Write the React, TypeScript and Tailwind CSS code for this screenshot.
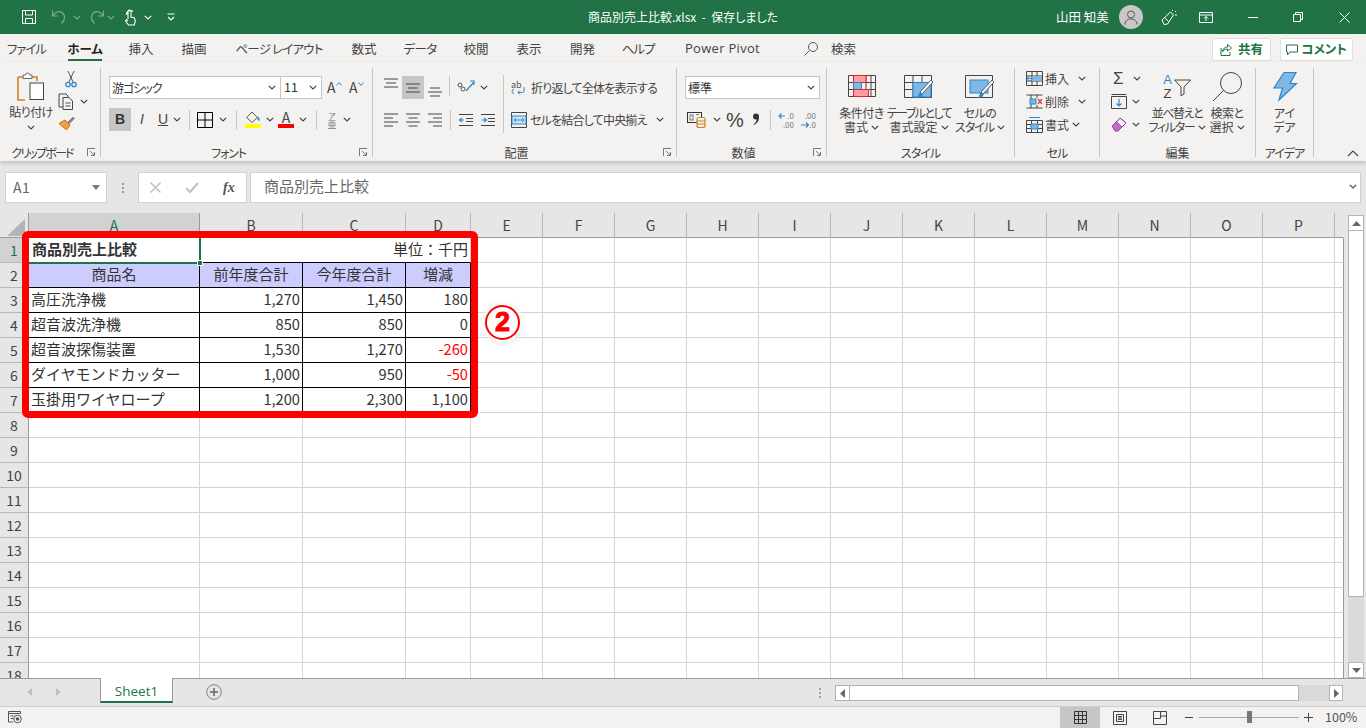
import React from "react";

const Chev = ({ c = "#444" }: { c?: string }) => (
  <svg width="8" height="5" viewBox="0 0 8 5" className="shrink-0"><path d="M.8.8 4 4 7.2.8" fill="none" stroke={c} strokeWidth="1.2" /></svg>
);

const Launcher = () => (
  <svg width="9" height="9" viewBox="0 0 9 9" className="absolute right-[4px] bottom-0">
    <path d="M.5 8V.5H8M3 3l4 4M4 7.5h3.500V4" fill="none" stroke="#777" strokeWidth="1" />
  </svg>
);

const Group = ({ w, label, children, launcher, lc = "" }: { w: string; label: string; children: React.ReactNode; launcher?: boolean; lc?: string }) => (
  <div className={`${w} relative flex h-[89px] shrink-0 flex-col border-r border-[#c8c6c4]`}>
    <div className="h-[77px] shrink-0">{children}</div>
    <div className={`h-[12px] text-center text-[12px] leading-[16px] text-[#444] ${launcher ? "pr-[16px]" : ""} ${lc}`}>{label}</div>
    {launcher && <Launcher />}
  </div>
);

const S = ({ w, h, children, className = "" }: { w: number; h: number; children: React.ReactNode; className?: string }) => (
  <svg width={w} height={h} viewBox={`0 0 ${w} ${h}`} className={`shrink-0 overflow-visible ${className}`} fill="none">{children}</svg>
);

const Lines = ({ kind }: { kind: "l" | "c" | "r" }) => {
  const s = kind === "l" ? ["M0 1h14", "M0 5h9", "M0 9h14", "M0 13h9"] : kind === "c" ? ["M0 1h14", "M2.5 5h9", "M0 9h14", "M2.5 13h9"] : ["M0 1h14", "M5 5h9", "M0 9h14", "M5 13h9"];
  return <S w={14} h={14}>{s.map((d) => <path key={d} d={d} stroke="#444" />)}</S>;
};

const Sep = ({ m = "" }: { m?: string }) => <div className={`h-[20px] w-px shrink-0 bg-[#c8c6c4] ${m}`} />;

const Big = ({ l1, l2, chev, c1 = "", c2 = "" }: { l1: string; l2: string; chev?: boolean; c1?: string; c2?: string }) => (
  <div className="flex flex-col items-center text-[12px] leading-[14px] text-[#444] whitespace-nowrap">
    <div className={c1}>{l1}</div>
    <div className="flex items-center gap-[3px]"><span className={c2}>{l2}</span>{chev && <Chev />}</div>
  </div>
);

const tabs = [
  ["ファイル", "ml-[8px] w-[37px] tracking-[-1px]"],
  ["ホーム", "ml-[23px] w-[34px] font-bold text-[#222]"],
  ["挿入", "ml-[26px] w-[26px]"],
  ["描画", "ml-[27px] w-[26px]"],
  ["ページ レイアウト", "ml-[29px] w-[86px] tracking-[-0.8px]"],
  ["数式", "ml-[29px] w-[26px]"],
  ["データ", "ml-[27px] w-[32px] tracking-[-0.6px]"],
  ["校閲", "ml-[27px] w-[26px]"],
  ["表示", "ml-[27px] w-[26px]"],
  ["開発", "ml-[28px] w-[25px]"],
  ["ヘルプ", "ml-[27px] w-[32px] tracking-[-1px]"],
];

const colLetters = ["A", "B", "C", "D", "E", "F", "G", "H", "I", "J", "K", "L", "M", "N", "O", "P", ""];

type Cell = { t?: string; c?: string };
const rowsData: Record<number, Cell[]> = {
  1: [{ t: "商品別売上比較", c: "font-bold pl-[3px] text-[#111] border-b-[#000] text-[15px]" }, { c: "border-r-0 border-b-[#000]" }, { c: "border-r-0 border-b-[#000]" }, { t: "単位：千円", c: "justify-end pr-[2px] border-b-[#000] text-[15px]" }],
  2: [{ t: "商品名", c: "justify-center text-[15px]" }, { t: "前年度合計", c: "justify-center text-[15px]" }, { t: "今年度合計", c: "justify-center text-[15px]" }, { t: "増減", c: "justify-center text-[15px]" }],
  3: [{ t: "高圧洗浄機", c: "text-[15px]" }, { t: "1,270" }, { t: "1,450" }, { t: "180" }],
  4: [{ t: "超音波洗浄機", c: "text-[15px]" }, { t: "850" }, { t: "850" }, { t: "0" }],
  5: [{ t: "超音波探傷装置", c: "text-[15px]" }, { t: "1,530" }, { t: "1,270" }, { t: "-260", c: "text-[#ff0000]" }],
  6: [{ t: "ダイヤモンドカッター", c: "text-[15px]" }, { t: "1,000" }, { t: "950" }, { t: "-50", c: "text-[#ff0000]" }],
  7: [{ t: "玉掛用ワイヤロープ", c: "text-[15px]" }, { t: "1,200" }, { t: "2,300" }, { t: "1,100" }],
};

const Sheet = () => (
  <div className="relative grid h-[465px] w-[1344px] shrink-0 grid-cols-[29px_171px_103px_103px_65px_repeat(12,72px)_9px] auto-rows-[25px] overflow-hidden bg-white">
    <div className="flex border-r border-b border-[#9a9a9a] bg-[#e6e6e6] pt-[6px] pl-[7px]">
      <svg width="18" height="17" viewBox="0 0 18 17"><path d="M18 0v17H0z" fill="#b4b4b4" /></svg>
    </div>
    {colLetters.map((l, i) => (
      <div key={i} className={`flex items-center justify-center border-r border-b text-[14px] ${i === 0 ? "border-r-[#9a9a9a] border-b-[#9a9a9a] bg-[#d2d2d2] text-[#217346]" : i === 16 ? "border-r-[#e6e6e6] border-b-[#9a9a9a] bg-[#e6e6e6]" : "border-r-[#b8b8b8] border-b-[#9a9a9a] bg-[#e6e6e6] text-[#444]"}`}>{l}</div>
    ))}
    {Array.from({ length: 18 }, (_, ri) => {
      const r = ri + 1;
      const data = rowsData[r];
      return (
        <React.Fragment key={r}>
          <div className={`flex items-center justify-center border-r border-b border-r-[#9a9a9a] border-b-[#b8b8b8] text-[14px] ${r === 1 ? "bg-[#d2d2d2] text-[#217346]" : "bg-[#e6e6e6] text-[#444]"}`}>{r}</div>
          {colLetters.map((_, ci) => {
            const cell = data?.[ci];
            if (cell) {
              const header = r === 2;
              const border = r === 1 ? "border-b border-r border-r-[#d4d4d4]" : "border-b border-r border-black";
              const align = ci > 0 && r > 2 ? "justify-end pr-[2px]" : ci === 0 && r > 2 ? "pl-[2px]" : "";
              return (
                <div key={ci} className={`flex items-center whitespace-nowrap pb-[2px] text-[14.67px] text-[#333] ${border} ${align} ${header ? "bg-[#ccccff]" : "bg-white"} ${cell.c ?? ""}`}>{cell.t}</div>
              );
            }
            return <div key={ci} className={`border-r border-b border-b-[#d4d4d4] ${ci === 16 ? "border-r-[#9a9a9a]" : "border-r-[#d4d4d4]"}`} />;
          })}
        </React.Fragment>
      );
    })}
    <div className="pointer-events-none absolute left-[29px] top-[25px] h-[26px] w-[172px] border-r-2 border-b-2 border-[#217346]" />
    <div className="absolute left-[197px] top-[47px] h-[6px] w-[6px] border border-white bg-[#217346]" />
    <div className="pointer-events-none absolute left-[22px] top-[18px] h-[187px] w-[456px] rounded-[6px] border-[7px] border-[#ff0000]" />
    <div className="absolute left-[485px] top-[92px] flex h-[35px] w-[35px] items-center justify-center rounded-full border-2 border-[#ff0000] bg-white text-[27px] font-bold leading-none text-[#ff0000] shadow-[0_0_4px_3px_rgba(255,255,255,0.95),0_1px_5px_3px_rgba(0,0,0,0.1)] [-webkit-text-stroke:1px_#ff0000] [font-family:'Liberation_Sans',sans-serif]">2</div>
  </div>
);

export default function App() {
  return (
    <div className="flex h-[728px] w-[1366px] flex-col overflow-hidden bg-[#e6e6e6] [font-family:'Noto_Sans_CJK_JP','Liberation_Sans',sans-serif]">
      {/* title bar */}
      <div className="flex h-[34px] shrink-0 items-center bg-[#217346] text-white">
        <S w={16} h={16} className="ml-[21px]"><path d="M1.500 1.500h13v13h-13zM4.500 1.500v4.500h7V1.500M4.500 14.500V9.500h7v5" stroke="#fff" /></S>
        <S w={16} h={16} className="ml-[14px]"><path d="M1.500 1.500V7h5.500M1.800 6.800C4 3 8 1.500 11 3.500c3.500 2.500 3.500 7.500-.5 11" stroke="#7fa891" strokeWidth="1.200" /></S>
        <div className="ml-[6px]"><Chev c="#7fa891" /></div>
        <S w={16} h={16} className="ml-[8px]"><path d="M14.500 1.500V7H9M14.200 6.800C12 3 8 1.500 5 3.500c-3.500 2.500-3.500 7.500.5 11" stroke="#7fa891" strokeWidth="1.200" /></S>
        <div className="ml-[2px]"><Chev c="#7fa891" /></div>
        <S w={12} h={17} className="ml-[9px]"><path d="M4 10V2.500a1.500 1.500 0 0 1 3 0V8l3.500 1 .8 3-1 4H4.500L1.500 12l1-1.500L4 12M2.500 6a4 4 0 0 1 6.500-3.500" stroke="#fff" strokeWidth="1.100" /></S>
        <div className="ml-[8px]"><Chev c="#fff" /></div>
        <S w={8} h={8} className="ml-[15px]"><path d="M.5 1h7M1 4l3 3 3-3" stroke="#fff" strokeWidth="1.100" /></S>
        <div className="ml-[412px] w-[192px] whitespace-nowrap text-center text-[12px] [font-feature-settings:'palt']">商品別売上比較.xlsx&nbsp; -&nbsp; 保存しました</div>
        <div className="ml-[277px] w-[52px] whitespace-nowrap text-[12.500px]">山田 知美</div>
        <div className="ml-[11px] flex h-[24px] w-[24px] items-center justify-center rounded-full bg-[#c8c8c8]">
          <S w={14} h={15}><circle cx="7" cy="4.500" r="3.500" stroke="#555" /><path d="M.8 14.500c.5-4 3-5.500 6.200-5.500s5.700 1.500 6.200 5.500" stroke="#555" /></S>
        </div>
        <S w={16} h={17} className="ml-[18px]"><path d="M1 11 9.500 3l3 3-6 9-3.500.5zM4 9l3.500 3.500M11 1l1 1M14 3l1-1M14 6h2" stroke="#fff" /></S>
        <S w={14} h={11} className="ml-[22px]"><path d="M.5.500h13v10H.500zM.5 3h13M7 9V4.500M5 6.500l2-2 2 2" stroke="#fff" /></S>
        <div className="ml-[35px] h-px w-[10px] bg-white" />
        <S w={10} h={10} className="ml-[35px]"><path d="M.5 2.500h7v7h-7zM2.500 2.500v-2h7v7h-2" stroke="#fff" /></S>
        <S w={11} h={11} className="ml-[36px]"><path d="m.5.500 10 10M10.500.500l-10 10" stroke="#fff" /></S>
      </div>

      {/* tabs */}
      <div className="flex h-[28px] shrink-0 items-start bg-[#f3f2f1] text-[12.500px] text-[#444] [font-feature-settings:'palt']">
        {tabs.map(([t, c]) => (
          <div key={t} className={`relative flex h-[27px] items-center justify-center whitespace-nowrap pt-[3px] ${c}`}>
            {t}
            {t === "ホーム" && <div className="absolute bottom-0 left-0 right-0 h-[2px] bg-[#217346]" />}
          </div>
        ))}
        <div className="ml-[31px] flex h-[27px] items-center pt-[3px] text-[13px] tracking-[0.3px] [font-family:'Open_Sans',sans-serif]">Power Pivot</div>
        <S w={14} h={14} className="ml-[44px] mt-[8px]"><circle cx="9" cy="5" r="4.500" stroke="#555" /><path d="M5.500 8.500.5 13.500" stroke="#555" /></S>
        <div className="ml-[13px] flex h-[27px] items-center pt-[3px]">検索</div>
        <div className="ml-[356px] mt-[4px] flex h-[23px] w-[59px] items-center justify-center gap-[5px] rounded-[2px] border border-[#e1dfdd] bg-white text-[12.500px] font-bold text-[#217346]">
          <S w={13} h={13}><path d="M7.500 1.500 11.500 5l-4 3V6c-3 0-4.500 1-5 3 0-3 2-5 5-5zM1 5v7.500h9V9" stroke="#217346" /></S>共有
        </div>
        <div className="ml-[9px] mt-[4px] flex h-[23px] w-[73px] items-center justify-center gap-[3px] rounded-[2px] border border-[#e1dfdd] bg-white text-[12.500px] font-bold text-[#217346]">
          <S w={12} h={12}><path d="M.5 1h11v7H4L1.500 11V8h-1z" stroke="#217346" /></S>コメント
        </div>
      </div>

      {/* ribbon */}
      <div className="relative flex h-[99px] shrink-0 bg-[#f3f2f1] pt-[6px] text-[#444] shadow-[0_2px_4px_rgba(0,0,0,0.18)] [font-feature-settings:'palt']">
        {/* clipboard */}
        <Group w="w-[101px]" label="クリップボード" launcher lc="tracking-[-1.800px]">
          <div className="flex">
            <div className="ml-[10px] flex w-[42px] flex-col items-center">
              <S w={28} h={28} className="mt-[4px]">
                <path d="M1 5h5M15 5h5v4M1 5v23h7" stroke="#d67f1e" strokeWidth="1.600" />
                <path d="M6 5V3h2.500a2 2 0 0 1 4 0H15v3.500H6z" fill="#fff" stroke="#666" />
                <rect x="13" y="11" width="13.500" height="16.500" fill="#fff" stroke="#444" />
              </S>
              <div className="mt-[5px] whitespace-nowrap text-[12px] leading-[14px] tracking-[-0.5px]">貼り付け</div>
              <div className="mt-[6px]"><Chev /></div>
            </div>
            <div className="ml-[6px] flex flex-col">
              <S w={12} h={17} className="ml-[7px] mt-[3px]"><path d="M3 0l5 11M9 0 4 11" stroke="#555" /><circle cx="3" cy="13.500" r="2.200" stroke="#2e86c8" strokeWidth="1.300" /><circle cx="9" cy="13.500" r="2.200" stroke="#2e86c8" strokeWidth="1.300" /></S>
              <div className="mt-[5px] flex items-center gap-[5px]">
                <S w={17} h={17}><path d="M1 1h7l2 2v11H1z" fill="#f3f2f1" stroke="#444" /><path d="M5 4.500h6l3.500 3.500v8.500H5z" fill="#f3f2f1" stroke="#444" /><path d="M7.500 10h5M7.500 13h5" stroke="#555" /></S>
                <Chev />
              </div>
              <S w={17} h={15} className="mt-[5px]"><path d="M9 8l6-6 1.500 1.500-6 6z" fill="#888" stroke="#666" strokeWidth=".6" /><path d="M1 8.500 7 5l5 5-3.500 5z" fill="#f0a040" stroke="#c8701a" /></S>
            </div>
          </div>
        </Group>

        {/* font */}
        <Group w="w-[272px]" label="フォント" launcher lc="tracking-[-1.200px]">
          <div className="flex flex-col pl-[8px] pt-[8px]">
            <div className="flex h-[23px] items-center">
              <div className="flex h-[23px] w-[172px] items-center justify-between border border-[#c6c6c6] bg-white pl-[2px] pr-[4px] text-[12px] tracking-[-1px] text-[#333]">游ゴシック<Chev /></div>
              <div className="flex h-[23px] w-[41px] items-center justify-between border border-l-0 border-[#c6c6c6] bg-white pl-[3px] pr-[4px] text-[12.500px] text-[#333]">11<Chev /></div>
              <div className="ml-[5px] flex w-[22px] items-center text-[14px]">A<S w={6} h={4} className="mb-[8px]"><path d="m.5 3.500 2.500-3 2.500 3" stroke="#2e86c8" /></S></div>
              <div className="flex w-[22px] items-center text-[14px]">A<S w={6} h={4} className="mb-[8px]"><path d="m.5.500 2.500 3 2.500-3" stroke="#2e86c8" /></S></div>
            </div>
            <div className="mt-[9px] flex h-[23px] items-center">
              <div className="flex h-[23px] w-[22px] items-center justify-center bg-[#c6c6c6] text-[14px] font-bold text-[#333] [font-family:'Liberation_Sans',sans-serif]">B</div>
              <div className="w-[22px] text-center text-[14px] italic [font-family:'Liberation_Sans',sans-serif]">I</div>
              <div className="w-[20px] text-center text-[14px] underline [font-family:'Liberation_Sans',sans-serif]">U</div>
              <Chev />
              <Sep m="ml-[8px]" />
              <S w={16} h={16} className="ml-[7px]"><path d="M.5.500h15v15H.500zM8 .5v15M.5 8h15" stroke="#000" /></S>
              <div className="ml-[6px]"><Chev /></div>
              <Sep m="ml-[9px]" />
              <div className="ml-[7px] flex w-[17px] flex-col items-center">
                <S w={15} h={13}><path d="m7 1 5.500 5.500L7 11.500 1.500 6.500z" stroke="#555" /><path d="M12.500 6c1 1.500 1.500 2.500 1.500 3.500" stroke="#2e86c8" strokeWidth="1.800" /></S>
                <div className="h-[4px] w-[16px] bg-[#ffff00]" />
              </div>
              <div className="ml-[5px]"><Chev /></div>
              <div className="ml-[4px] flex w-[16px] flex-col items-center text-[14px] leading-[13px]">A<div className="h-[4px] w-[16px] bg-[#ff0000]" /></div>
              <div className="ml-[5px]"><Chev /></div>
              <Sep m="ml-[9px]" />
              <S w={10} h={18} className="ml-[10px]">
                <text x="5" y="8" textAnchor="middle" fontSize="8" fill="#777">ア</text>
                <text x="5" y="17" textAnchor="middle" fontSize="9" fill="#777">亜</text>
              </S>
              <div className="ml-[6px]"><Chev /></div>
            </div>
          </div>
        </Group>

        {/* alignment */}
        <Group w="w-[304px]" label="配置" launcher>
          <div className="flex pl-[11px] pt-[8px]">
            <div className="flex w-[120px] flex-col">
              <div className="flex h-[23px] items-start">
                <S w={14} h={14} className="mt-[2px]"><path d="M0 1h14M2 5h10M0 9h14" stroke="#444" /></S>
                <div className="ml-[4px] flex h-[23px] w-[22px] items-center justify-center bg-[#c6c6c6]"><S w={14} h={10}><path d="M0 1h14M2 5h10M0 9h14" stroke="#444" /></S></div>
                <S w={14} h={10} className="ml-[4px] mt-[11px]"><path d="M2 1h10M0 5h14M2 9h10" stroke="#444" /></S>
                <Sep m="ml-[7px]" />
                <S w={18} h={15} className="ml-[7px] mt-[3px]"><path d="M9 12 17 3M13 2h4v4" stroke="#2e86c8" strokeWidth="1.200" /><circle cx="3" cy="6" r="2" stroke="#555" /><circle cx="6" cy="10" r="2" stroke="#555" /></S>
                <div className="ml-[5px] mt-[9px]"><Chev /></div>
              </div>
              <div className="mt-[9px] flex h-[23px] items-center">
                <Lines kind="l" />
                <div className="ml-[8px]"><Lines kind="c" /></div>
                <div className="ml-[8px]"><Lines kind="r" /></div>
                <Sep m="ml-[8px]" />
                <S w={14} h={12} className="ml-[8px]"><path d="M0 .5h14M7 4.500h7M7 7.500h7M0 11.500h14" stroke="#444" /><path d="M5 6H.500M3 4 .500 6 3 8" stroke="#2e86c8" strokeWidth="1.100" /></S>
                <S w={14} h={12} className="ml-[8px]"><path d="M0 .5h14M7 4.500h7M7 7.500h7M0 11.500h14" stroke="#444" /><path d="M.5 6H5M3 4l2.500 2L3 8" stroke="#2e86c8" strokeWidth="1.100" /></S>
              </div>
            </div>
            <Sep m="h-[58px] ml-[-1px] mt-[-1px]" />
            <div className="ml-[7px] flex flex-col text-[12px]">
              <div className="flex h-[23px] items-center whitespace-nowrap">
                <S w={17} h={17} className="mr-[3px]"><text x="0" y="9" fontSize="9" fill="#555">ab</text><path d="M3 10.500a2 2 0 1 0 0 4M13 8v4a1.500 1.500 0 0 1-1.500 1.500H7M9 11.500l-2 2 2 2" stroke="#2e86c8" strokeWidth="1" /></S>
                <span className="tracking-[-0.8px]">折り返して全体を表示する</span>
              </div>
              <div className="mt-[9px] flex h-[23px] items-center whitespace-nowrap">
                <S w={16} h={16} className="mr-[3px]"><path d="M.5.500h15v15H.500z" stroke="#444" /><rect x="1" y="4" width="14" height="8" fill="#cfe5f5" stroke="#2e86c8" /><path d="M3 8h10M5 6 3 8l2 2M11 6l2 2-2 2" stroke="#2e86c8" /></S>
                <span className="tracking-[-0.8px]">セルを結合して中央揃え</span>
                <div className="ml-[9px]"><Chev /></div>
              </div>
            </div>
          </div>
        </Group>

        {/* number */}
        <Group w="w-[150px]" label="数値" launcher>
          <div className="flex flex-col pl-[8px] pt-[8px]">
            <div className="flex h-[23px] w-[135px] items-center justify-between border border-[#c6c6c6] bg-white pl-[2px] pr-[4px] text-[12px] text-[#333]">標準<Chev /></div>
            <div className="mt-[9px] flex h-[23px] items-center">
              <S w={20} h={17} className="ml-[2px]"><rect x=".5" y="1.500" width="14" height="10" stroke="#333" /><rect x="3" y="4" width="3" height="5" stroke="#777" /><path d="M9 3.500h3" stroke="#777" /><rect x="10" y="6.500" width="8" height="10" rx="2" fill="#f3f2f1" stroke="#d67f1e" strokeWidth="1.200" /><path d="M10 10h8M10 13h8" stroke="#d67f1e" /></S>
              <div className="ml-[6px]"><Chev /></div>
              <div className="ml-[5px] w-[18px] text-center text-[20px] leading-none [font-family:'Liberation_Sans',sans-serif]">%</div>
              <S w={9} h={13} className="ml-[7px]"><circle cx="5" cy="3.500" r="3" fill="#333" /><path d="M7.800 4c.5 3.500-1.500 6.500-4.800 8l-.5-.8C4.500 10 5.500 8.500 5.500 6.500z" fill="#333" /></S>
              <Sep m="ml-[10px]" />
              <S w={16} h={18} className="ml-[7px]">
                <text x="16" y="8" textAnchor="end" fontSize="8" fill="#777">.0</text>
                <text x="16" y="17" textAnchor="end" fontSize="8" fill="#777">.00</text>
                <path d="M7 5H1M3.500 2.500 1 5l2.500 2.500" stroke="#2e86c8" strokeWidth="1.100" />
              </S>
              <S w={16} h={18} className="ml-[6px]">
                <text x="16" y="8" textAnchor="end" fontSize="8" fill="#777">.00</text>
                <text x="16" y="17" textAnchor="end" fontSize="8" fill="#777">.0</text>
                <path d="M1 14h7M6 11.500 8.500 14 6 16.500" stroke="#2e86c8" strokeWidth="1.100" />
              </S>
            </div>
          </div>
        </Group>

        {/* styles */}
        <Group w="w-[188px]" label="スタイル" lc="tracking-[-1px]">
          <div className="flex pt-[7px]">
            <div className="flex w-[66px] flex-col items-center pl-[3px]">
              <S w={28} h={23}><path d="M.5.500h27v21H.500zM5.500.500v21M12 .5v21M18 .5v21M23 .5v21M.5 7.500h27M.5 14.500h27" stroke="#444" /><rect x="5.500" y=".5" width="12.500" height="7" fill="#ff9ca3" stroke="#d92a2a" /><rect x="5.500" y="7.500" width="8" height="7" fill="#7fb7e6" stroke="#2e86c8" /><rect x="5.500" y="14.500" width="15" height="7" fill="#ff9ca3" stroke="#d92a2a" /></S>
              <div className="mt-[8px]"><Big l1="条件付き" l2="書式" chev c1="tracking-[-0.5px]" /></div>
            </div>
            <div className="flex w-[52px] flex-col items-center">
              <S w={30} h={27} className="-mb-[4px]"><path d="M.5.500h27v22H.500zM.5 7.500h27M.5 14.500h27M9 .5v22M18 .5v22" stroke="#444" /><rect x="9" y="7.500" width="18" height="14.500" fill="#7fb7e6" stroke="#2e86c8" /><path d="M29 7 18 19l-2-2L27 5z" fill="#fff" stroke="#555" /><path d="M15.500 18c2-1 3 .5 3 1.500 0 2-2 3.500-5 3.500 1-1.500.5-4 2-5z" fill="#2e86c8" /></S>
              <div className="mt-[8px]"><Big l1="テーブルとして" l2="書式設定" chev c1="tracking-[-1.500px]" /></div>
            </div>
            <div className="ml-[5px] flex w-[60px] flex-col items-center">
              <S w={30} h={27} className="-mb-[4px]"><path d="M.5.500h27v22H.500z" stroke="#444" /><rect x="5" y="5" width="18" height="13" fill="#7fb7e6" stroke="#2e86c8" /><path d="M29 7 18 19l-2-2L27 5z" fill="#fff" stroke="#555" /><path d="M15.500 18c2-1 3 .5 3 1.500 0 2-2 3.500-5 3.500 1-1.500.5-4 2-5z" fill="#2e86c8" /></S>
              <div className="mt-[8px]"><Big l1="セルの" l2="スタイル" chev c1="tracking-[-0.5px]" c2="tracking-[-1px]" /></div>
            </div>
          </div>
        </Group>

        {/* cells */}
        <Group w="w-[85px]" label="セル" lc="tracking-[-1px]">
          <div className="-mt-px flex flex-col pl-[11px] text-[12px]">
            {[
              { t: "挿入", ml: "ml-[9px]", i: <S w={17} h={15}><path d="M.5.500h16v14H.500zM.5 5h16M.5 10h16M6 .5v14M11 .5v14" stroke="#444" /><rect x="6" y="5" width="10" height="5" fill="#7fb7e6" /><path d="M7 7.500H1M3.500 5 1 7.500 3.500 10" stroke="#2e86c8" fill="none" /></S> },
              { t: "削除", ml: "ml-[9px]", i: <S w={17} h={15}><path d="M.5 1h16M.5 14h16M5 1v13M11 1v3M11 11v3" stroke="#444" /><rect x="4" y="5" width="6" height="5" fill="#7fb7e6" stroke="#2e86c8" /><path d="m12 5 4 5M16 5l-4 5" stroke="#e23d3d" strokeWidth="1.300" /></S> },
              { t: "書式", ml: "ml-[3px]", i: <S w={17} h={16}><path d="M.5 3.500h16v12H.500zM5.500 3.500v12M11.500 3.500v12M.5 7.500h16M.5 11.500h16" stroke="#444" /><rect x="5" y="7" width="7" height="5" fill="#7fb7e6" stroke="#2e86c8" /><path d="M3 .5h11" stroke="#2e86c8" /></S> },
            ].map((r) => (
              <div key={r.t} className="flex h-[23px] items-center">
                {r.i}
                <span className="ml-[2px]">{r.t}</span>
                <div className={r.ml}><Chev /></div>
              </div>
            ))}
          </div>
        </Group>

        {/* editing */}
        <Group w="w-[156px]" label="編集">
          <div className="flex pt-[3px]">
            <div className="-mt-[4px] ml-[11px] flex w-[38px] flex-col">
              <div className="flex h-[23px] items-center"><span className="ml-[2px] w-[14px] text-[17px] leading-none text-[#444] [font-family:'Liberation_Sans',sans-serif]">Σ</span><div className="ml-[6px]"><Chev /></div></div>
              <div className="flex h-[23px] items-center"><S w={16} h={15}><path d="M.5 2.500h15v12H.500zM.5 .5h15" stroke="#444" /><path d="M8 5v7M5.500 9.500 8 12l2.500-2.500" stroke="#2e86c8" strokeWidth="1.200" /></S><div className="ml-[5px]"><Chev /></div></div>
              <div className="flex h-[23px] items-center"><S w={16} h={15}><path d="M1 9l8-8 6 5-8 8H4z" fill="#c26bc9" stroke="#9a3fa3" /><path d="M5.500 5 11 10l4-4-6-5z" fill="#f4f0f5" stroke="#9a3fa3" /></S><div className="ml-[5px]"><Chev /></div></div>
            </div>
            <div className="flex w-[56px] flex-col items-center">
              <div className="mt-[1px] flex h-[29px] items-center">
                <div className="flex flex-col items-center text-[13px] leading-[14px] [font-family:'Liberation_Sans',sans-serif]"><span className="text-[#2e86c8]">A</span><span>Z</span></div>
                <S w={17} h={17} className="ml-[2px] mt-[1px]"><path d="M.5 1h16L10 8v7l-3 2V8z" stroke="#444" /></S>
              </div>
              <div className="mt-[5px]"><Big l1="並べ替えと" l2="フィルター" chev c1="tracking-[-1.400px]" c2="tracking-[-1.300px]" /></div>
            </div>
            <div className="flex w-[44px] flex-col items-center">
              <S w={30} h={30} className="mt-[1px]"><circle cx="19" cy="11" r="10.500" stroke="#444" /><path d="M11.500 18.500 1 29" stroke="#444" /></S>
              <div className="mt-[4px]"><Big l1="検索と" l2="選択" chev c1="tracking-[-0.5px]" /></div>
            </div>
          </div>
        </Group>

        {/* ideas */}
        <Group w="w-[58px]" label="アイデア" lc="tracking-[-1px]">
          <div className="flex flex-col items-center pt-[4px]">
            <S w={24} h={29}><path d="M11 .5h12l-6 11h6.500L6 28l3.500-12H1z" fill="#7fb7e6" stroke="#2e86c8" strokeWidth="1.200" /></S>
            <div className="mt-[5px]"><Big l1="アイ" l2="デア" /></div>
          </div>
        </Group>
        <svg width="12" height="7" viewBox="0 0 12 7" className="absolute left-[1347px] top-[88px]"><path d="m1 6 5-5 5 5" fill="none" stroke="#444" strokeWidth="1.200" /></svg>
      </div>

      {/* formula bar */}
      <div className="mt-[11px] flex h-[31px] shrink-0 items-stretch">
        <div className="ml-[5px] flex w-[102px] items-center justify-between border border-[#d0d0d0] bg-white pl-[7px] pr-[6px] text-[14px] tracking-[0.5px] text-[#666]">
          A1
          <svg width="8" height="5" viewBox="0 0 8 5"><path d="M0 0h8L4 5z" fill="#777" /></svg>
        </div>
        <div className="flex w-[31px] flex-col items-center justify-center gap-[2px]">
          <div className="h-[2px] w-[2px] bg-[#999]" /><div className="h-[2px] w-[2px] bg-[#999]" /><div className="h-[2px] w-[2px] bg-[#999]" />
        </div>
        <div className="flex w-[109px] items-center border border-[#d0d0d0] bg-white">
          <S w={11} h={11} className="ml-[11px]"><path d="m.5.500 10 10M10.500.500l-10 10" stroke="#c0c0c0" strokeWidth="1.500" /></S>
          <S w={14} h={11} className="ml-[24px]"><path d="m1 6 4 4 8-9" stroke="#c0c0c0" strokeWidth="2" /></S>
          <div className="ml-[24px] text-[14px] font-bold italic leading-none text-[#555] [font-family:'Liberation_Serif',serif]">fx</div>
        </div>
        <div className="ml-[3px] flex w-[1111px] items-center justify-between border border-[#d0d0d0] bg-white pb-[2px] pl-[13px] pr-[3px] text-[15px] text-[#666]">
          商品別売上比較
          <Chev />
        </div>
      </div>

      {/* sheet */}
      <div className="mt-[10px] flex h-[465px] shrink-0">
        <Sheet />
        <div className="flex w-[22px] flex-col pl-[4px] pr-[2px] pt-[2px]">
          <div className="flex h-[16px] items-center justify-center border border-[#b4b4b4] bg-white"><svg width="9" height="5" viewBox="0 0 9 5"><path d="M4.500 0 9 5H0z" fill="#666" /></svg></div>
          <div className="h-[366px] border-x border-b border-[#b4b4b4] bg-white" />
          <div className="flex-1 bg-[#d9d9d9]" />
          <div className="flex h-[16px] items-center justify-center border border-[#b4b4b4] bg-white"><svg width="9" height="5" viewBox="0 0 9 5"><path d="M0 0h9L4.500 5z" fill="#666" /></svg></div>
        </div>
      </div>

      {/* sheet tabs */}
      <div className="flex h-[28px] shrink-0 items-start border-t border-[#9a9a9a] bg-[#e6e6e6]">
        <svg width="5" height="8" viewBox="0 0 5 8" className="ml-[27px] mt-[9px]"><path d="M5 0v8L0 4z" fill="#c0c0c0" /></svg>
        <svg width="5" height="8" viewBox="0 0 5 8" className="ml-[24px] mt-[9px]"><path d="M0 0v8l5-4z" fill="#c0c0c0" /></svg>
        <div className="ml-[39px] -mt-px flex h-[25px] w-[73px] items-center justify-center border-x border-[#9a9a9a] border-b-2 border-b-[#217346] bg-white pt-[3px] text-[13.500px] text-[#217346] [font-family:'Open_Sans',sans-serif]">Sheet1</div>
        <svg width="16" height="16" viewBox="0 0 16 16" className="ml-[33px] mt-[5px]"><circle cx="8" cy="8" r="7.300" fill="none" stroke="#808080" /><path d="M8 4v8M4 8h8" stroke="#666" strokeWidth="1.500" /></svg>
        <div className="ml-[597px] mt-[6px] flex h-[16px] w-[2px] flex-col items-center justify-center gap-[2px]">
          <div className="h-[2px] w-[2px] bg-[#a0a0a0]" /><div className="h-[2px] w-[2px] bg-[#a0a0a0]" /><div className="h-[2px] w-[2px] bg-[#a0a0a0]" />
        </div>
        <div className="ml-[14px] mt-[6px] flex h-[16px] w-[508px]">
          <div className="flex w-[15px] items-center justify-center border border-[#b4b4b4] bg-white"><svg width="5" height="9" viewBox="0 0 5 9"><path d="M5 0v9L0 4.500z" fill="#666" /></svg></div>
          <div className="w-[449px] border-y border-r border-[#b4b4b4] bg-white" />
          <div className="flex-1 bg-[#d9d9d9]" />
          <div className="flex w-[14px] items-center justify-center border border-[#b4b4b4] bg-white"><svg width="5" height="9" viewBox="0 0 5 9"><path d="M0 0v9l5-4.500z" fill="#666" /></svg></div>
        </div>
      </div>

      {/* status */}
      <div className="flex h-[22px] shrink-0 items-center border-t border-[#d0cecb] bg-[#f3f2f1] text-[#444]">
        <S w={14} h={13} className="ml-[8px]"><path d="M.5.500h12v2H.500zM.5 2.500V11H5M2.500 5h3M2.500 7.500h3" stroke="#555" /><circle cx="9.500" cy="8" r="3.800" stroke="#555" /><circle cx="9.500" cy="8" r="1.800" fill="#555" /></S>
        <div className="ml-[1038px] flex h-[21px] w-[40px] items-center justify-center bg-[#c6c6c6]">
          <S w={13} h={13}><path d="M.5.500h12v12H.500zM4.500.500v12M8.500.500v12M.5 4.500h12M.5 8.500h12" stroke="#333" /></S>
        </div>
        <S w={14} h={14} className="ml-[13px]"><path d="M.5.500h13v13H.500zM3.500 3.500h7v7h-7zM5 5.500h4M5 7h4M5 8.500h4" stroke="#444" /></S>
        <S w={14} h={14} className="ml-[26px]"><path d="M.5.500h13v13H.500zM.5 7.500h7V.5M7.500 5H13" stroke="#444" /></S>
        <div className="ml-[18px] h-px w-[8px] bg-[#444]" />
        <div className="relative ml-[6px] h-px w-[100px] bg-[#a8a8a8]">
          <div className="absolute left-[48px] top-[-6px] h-[12px] w-[5px] bg-[#777]" />
        </div>
        <svg width="9" height="9" viewBox="0 0 9 9" className="ml-[5px]"><path d="M4.500 0v9M0 4.500h9" stroke="#444" /></svg>
        <div className="ml-[12px] whitespace-nowrap text-[12.500px] text-[#555]">100%</div>
      </div>
    </div>
  );
}
